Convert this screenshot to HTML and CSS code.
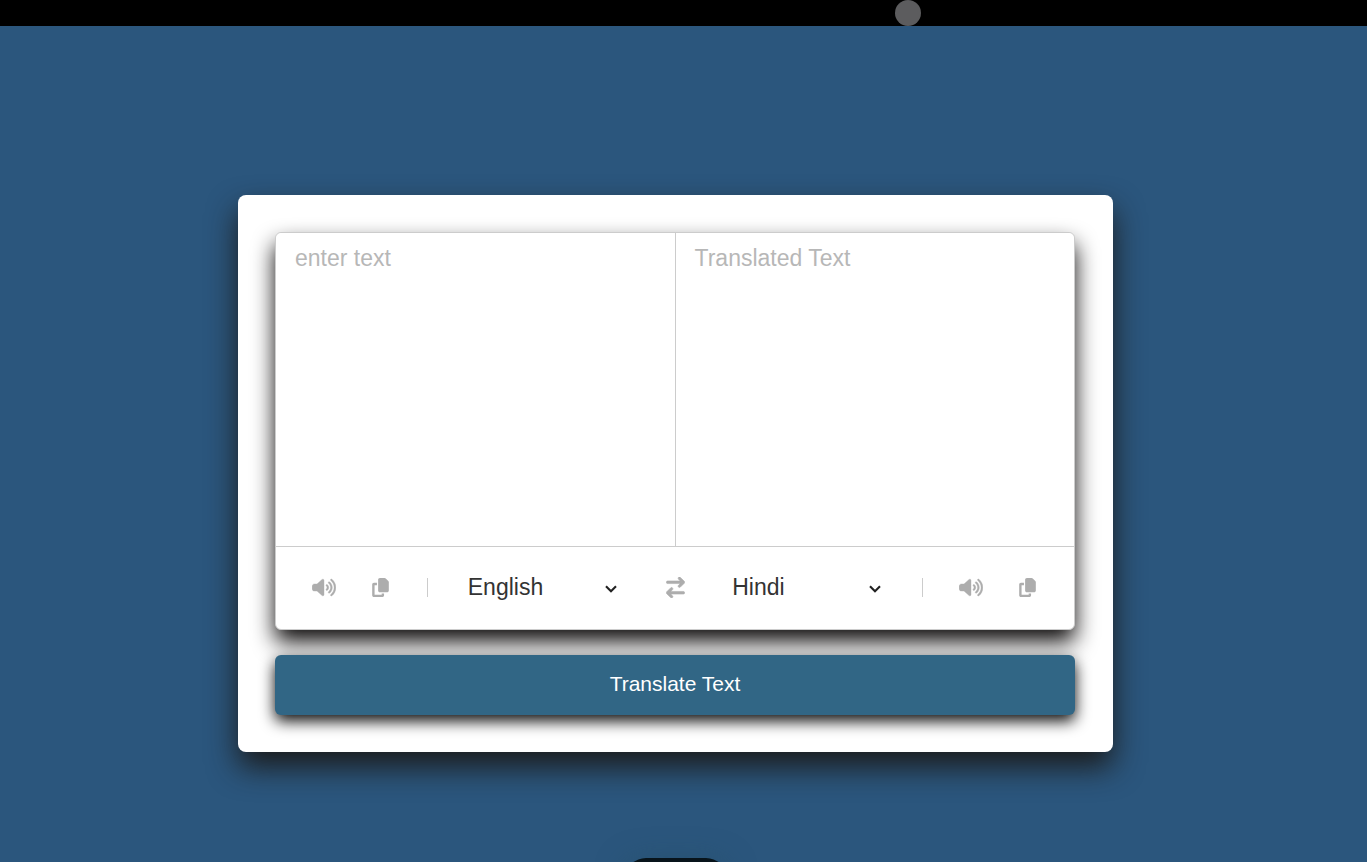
FILE: index.html
```
<!DOCTYPE html>
<html lang="en">
<head>
<meta charset="utf-8">
<meta name="viewport" content="width=device-width, initial-scale=1">
<title>Translator</title>
<link rel="stylesheet" href="styles.css">
</head>
<body>
<svg class="symbols" aria-hidden="true">
  <symbol id="volume" viewBox="0 0 640 512"><path d="M533.6 32.5C598.5 85.3 640 165.8 640 256s-41.5 170.8-106.4 223.5c-10.3 8.4-25.4 6.8-33.8-3.5s-6.8-25.4 3.5-33.8C557.5 398.2 592 331.2 592 256s-34.5-142.2-88.7-186.3c-10.3-8.4-11.8-23.5-3.5-33.8s23.5-11.8 33.8-3.5zM473.1 107c43.2 35.2 70.9 88.9 70.9 149s-27.7 113.8-70.9 149c-10.3 8.4-25.4 6.8-33.8-3.5s-6.8-25.4 3.5-33.8C475.3 341.3 496 301.1 496 256s-20.7-85.3-53.2-111.8c-10.3-8.4-11.8-23.5-3.5-33.8s23.5-11.8 33.8-3.5zm-60.5 74.5C434.1 199.1 448 225.9 448 256s-13.9 56.9-35.4 74.5c-10.3 8.4-25.4 6.8-33.8-3.5s-6.8-25.4 3.5-33.8C393.1 284.4 400 271 400 256s-6.9-28.4-17.7-37.3c-10.3-8.4-11.8-23.5-3.5-33.8s23.5-11.8 33.8-3.5zM301.1 34.8C312.6 40 320 51.4 320 64V448c0 12.6-7.4 24-18.9 29.2s-25 3.1-34.4-5.3L131.8 352H64c-35.3 0-64-28.7-64-64V224c0-35.3 28.7-64 64-64h67.8L266.7 40.1c9.4-8.4 22.9-10.4 34.4-5.3z"/></symbol>
  <symbol id="copy" viewBox="0 0 448 512"><path d="M208 0H332.1c12.7 0 24.9 5.1 33.9 14.1l67.9 67.9c9 9 14.1 21.2 14.1 33.9V336c0 26.5-21.5 48-48 48H208c-26.5 0-48-21.5-48-48V48c0-26.5 21.5-48 48-48zM48 128h80v64H64V448H256V416h64v48c0 26.5-21.5 48-48 48H48c-26.5 0-48-21.5-48-48V176c0-26.5 21.5-48 48-48z"/></symbol>
  <symbol id="swap" viewBox="0 0 448 512"><path d="M438.6 150.6c12.5-12.5 12.5-32.8 0-45.3l-96-96c-12.5-12.5-32.8-12.5-45.3 0s-12.5 32.8 0 45.3L338.7 96 32 96C14.3 96 0 110.3 0 128s14.3 32 32 32l306.7 0-41.4 41.4c-12.5 12.5-12.5 32.8 0 45.3s32.8 12.5 45.3 0l96-96zm-333.3 352c12.5 12.5 32.8 12.5 45.3 0s12.5-32.8 0-45.3L109.3 416 416 416c17.7 0 32-14.3 32-32s-14.3-32-32-32l-306.7 0 41.4-41.4c12.5-12.5 12.5-32.8 0-45.3s-32.8-12.5-45.3 0l-96 96c-12.5 12.5-12.5 32.8 0 45.3l96 96z"/></symbol>
  <symbol id="chevron" viewBox="0 0 12 8"><path d="M1 1.2 6 6.3l5-5.1" fill="none" stroke="currentColor" stroke-width="2.1"/></symbol>
</svg>
<header class="topbar"><span class="dot"></span></header>
<main class="page">
  <section class="card">
    <div class="wrapper">
      <div class="texts">
        <textarea class="text" placeholder="enter text" aria-label="Text to translate" spellcheck="false"></textarea>
        <textarea class="text" placeholder="Translated Text" aria-label="Translated text" readonly></textarea>
      </div>
      <div class="controls">
        <div class="tools tools-from">
          <button class="icon-button" type="button" aria-label="Listen to source text"><svg class="icon volume"><use href="#volume"/></svg></button>
          <button class="icon-button" type="button" aria-label="Copy source text"><svg class="icon copy"><use href="#copy"/></svg></button>
        </div>
        <div class="language">
          <select class="select" aria-label="Source language"><option>English</option><option>Hindi</option></select>
          <svg class="chevron" aria-hidden="true"><use href="#chevron"/></svg>
        </div>
        <button class="icon-button swap-button" type="button" aria-label="Swap languages"><svg class="icon swap"><use href="#swap"/></svg></button>
        <div class="language">
          <select class="select" aria-label="Target language"><option>Hindi</option><option>English</option></select>
          <svg class="chevron" aria-hidden="true"><use href="#chevron"/></svg>
        </div>
        <div class="tools tools-to">
          <button class="icon-button" type="button" aria-label="Listen to translation"><svg class="icon volume"><use href="#volume"/></svg></button>
          <button class="icon-button" type="button" aria-label="Copy translation"><svg class="icon copy"><use href="#copy"/></svg></button>
        </div>
      </div>
    </div>
    <button class="translate" type="button">Translate Text</button>
  </section>
</main>
<div class="dock"></div>
</body>
</html>
```
FILE: styles.css
```
* {
  box-sizing: border-box;
}

body {
  margin: 0;
  min-height: 100vh;
  background: #2b567d;
  font-family: "Liberation Sans", Arial, sans-serif;
  overflow: hidden;
}

.symbols {
  display: none;
}

.topbar {
  display: flex;
  height: 26px;
  padding-left: 895px;
  background: #000;
}

.dot {
  width: 26px;
  height: 26px;
  border-radius: 50%;
  background: #5c5c5e;
}

.page {
  display: flex;
  justify-content: center;
  padding: 169px 16px 64px 0;
}

.card {
  width: 100%;
  max-width: 875px;
  padding: 37px 38px 37px 37px;
  border-radius: 8px;
  background: #fff;
  box-shadow: 0 15px 30px #1c1c1c;
}

.wrapper {
  border: 1px solid #ccc;
  border-radius: 6px;
  background: #fff;
  box-shadow: 0 12px 22px #0f0d0d;
}

.texts {
  display: flex;
  border-bottom: 1px solid #ccc;
}

.text {
  flex: 1;
  min-width: 0;
  height: 313px;
  padding: 12px 19px;
  border: none;
  border-radius: 6px 6px 0 0;
  outline: none;
  resize: none;
  background: #fff;
  color: #333;
  font: 23px/26px "Liberation Sans", Arial, sans-serif;
}

.text + .text {
  border-left: 1px solid #ccc;
  border-radius: 0 6px 0 0;
}

.text::placeholder {
  color: #b7b7b7;
}

.controls {
  display: flex;
  align-items: center;
  justify-content: space-between;
  height: 82px;
  padding: 0 38px 2px 36px;
}

.tools {
  display: flex;
  align-items: center;
  gap: 36px;
}

.tools-from {
  padding-right: 38px;
  border-right: 1px solid #ccc;
}

.tools-to {
  padding-left: 36px;
  border-left: 1px solid #ccc;
}

.icon-button {
  display: flex;
  padding: 0;
  border: none;
  background: none;
  color: #adadad;
  cursor: pointer;
}

.swap-button {
  margin: 0 8px;
}

.icon {
  height: 19px;
  fill: currentColor;
  stroke: currentColor;
}

.volume {
  width: 24px;
  stroke-width: 10px;
}

.copy {
  width: 17px;
  stroke-width: 0;
}

.swap {
  width: 19px;
  height: 21px;
  stroke-width: 14px;
}

.language {
  display: grid;
  align-items: center;
  width: 156px;
}

.select {
  grid-area: 1 / 1;
  width: 100%;
  padding: 0 32px 0 3px;
  border: none;
  outline: none;
  appearance: none;
  background: none;
  color: #333;
  font: 23px/28px "Liberation Sans", Arial, sans-serif;
}

.chevron {
  grid-area: 1 / 1;
  justify-self: end;
  width: 12px;
  height: 8px;
  margin: 3px 4px 0 0;
  color: #222;
  pointer-events: none;
}

.translate {
  display: block;
  width: 100%;
  height: 60px;
  margin-top: 25px;
  padding: 0 0 2px;
  border: none;
  border-radius: 6px;
  background: #316685;
  box-shadow: 0 6px 15px #0a0a0a;
  color: #fff;
  font: 21px/24px "Liberation Sans", Arial, sans-serif;
  cursor: pointer;
}

.dock {
  position: fixed;
  bottom: -36px;
  left: calc(50% - 58px);
  width: 100px;
  height: 40px;
  border-radius: 20px;
  background: #08141b;
  box-shadow: 0 4px 30px rgba(38, 80, 105, 0.8);
}
```
